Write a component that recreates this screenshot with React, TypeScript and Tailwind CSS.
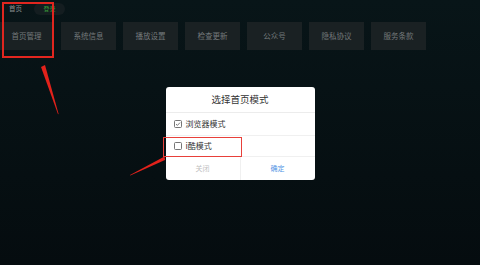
import React from "react";

const TILES = ["首页管理", "系统信息", "播放设置", "检查更新", "公众号", "隐私协议", "服务条款"];

function CheckIcon({ checked }: { checked: boolean }) {
  return (
    <svg width="8" height="8" viewBox="0 0 8 8" className="shrink-0">
      <rect x="0.5" y="0.5" width="7" height="7" rx="1" fill="none" stroke="#666" strokeWidth="0.9" />
      {checked && <path d="M2 4.1 L3.4 5.4 L6 2.6" fill="none" stroke="#666" strokeWidth="0.9" />}
    </svg>
  );
}

export default function App() {
  return (
    <div
      className="relative h-[265px] w-[480px] overflow-hidden bg-gradient-to-b from-[#081518] to-[#050c0f]"
      style={{ fontFamily: '"Noto Sans CJK SC", "Noto Sans", sans-serif' }}
    >
      {/* top bar */}
      <div className="flex h-[16px] items-center gap-[12px] pl-[9px] pt-[1px]">
        <span className="text-[6.5px] leading-none text-[#8a9092]">首页</span>
        <span className="flex h-[12px] w-[31px] items-center justify-center rounded-full bg-[#141d20] text-[6px] leading-none text-[#3a9e3a]">
          登录
        </span>
      </div>

      {/* settings row */}
      <div className="mt-[6px] ml-[-1px] flex gap-[7px]">
        {TILES.map((t) => (
          <div
            key={t}
            className="flex h-[28px] w-[55px] shrink-0 items-center justify-center bg-[#1a2123] text-[7.5px] text-[#74797b]"
          >
            {t}
          </div>
        ))}
      </div>

      {/* highlight on first tile */}
      <div className="absolute left-[2px] top-[2px] h-[56px] w-[52px] border-2 border-[#e0261f]" />

      {/* dialog */}
      <div className="absolute inset-0 flex items-center justify-center pt-[1px]">
        <div className="flex h-[93px] w-[149px] flex-col overflow-hidden rounded-[3px] bg-white">
          <div className="flex h-[26px] items-center justify-center border-b border-[#ececec] text-[9.5px] text-[#333]">
            选择首页模式
          </div>
          <div className="flex h-[23px] items-center gap-[4px] border-b border-[#f0f0f0] pl-[8px] text-[8px] text-[#333]">
            <CheckIcon checked />
            浏览器模式
          </div>
          <div className="relative flex h-[21px] items-center gap-[4px] border-b border-[#f0f0f0] pl-[8px] text-[8px] text-[#333]">
            <CheckIcon checked={false} />
            i酷模式
          </div>
          <div className="flex flex-1 text-[7px]">
            <div className="flex flex-1 items-center justify-center border-r border-[#f0f0f0] text-[#c0c0c0]">关闭</div>
            <div className="flex flex-1 items-center justify-center text-[#4f93e4]">确定</div>
          </div>
        </div>
      </div>

      {/* highlight on second option */}
      <div className="absolute left-[163px] top-[137px] h-[20px] w-[79px] border-[1.5px] border-[#e8403a]" />

      {/* annotation arrows */}
      <svg className="pointer-events-none absolute inset-0" width="480" height="265" viewBox="0 0 480 265">
        <polygon points="41,67 45,65 58.6,114 58,114.2" fill="#e3221b" />
        <polygon points="164.5,156.5 165,160 130.3,175.5 130,175" fill="#e3221b" />
      </svg>
    </div>
  );
}
